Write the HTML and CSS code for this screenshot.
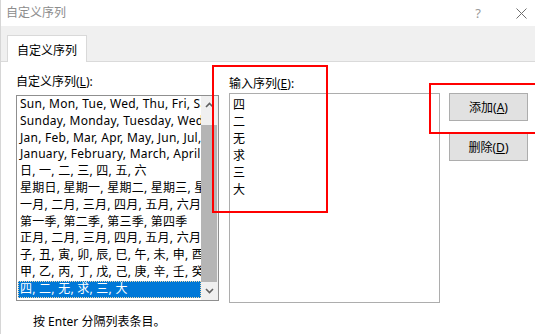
FILE: index.html
```html
<!DOCTYPE html>
<html lang="zh-CN">
<head>
<meta charset="utf-8">
<title>自定义序列</title>
<link rel="stylesheet" href="styles.css">
</head>
<body>
<div class="window">
  <div class="titlebar">
    <span class="title">自定义序列</span>
    <span class="help">?</span>
    <span class="close"><svg width="11" height="11" viewBox="0 0 11 11"><path d="M0.5 0.5 L10.5 10.5 M10.5 0.5 L0.5 10.5" stroke="#6e6e6e" stroke-width="1" fill="none"/></svg></span>
  </div>
  <div class="tabstrip">
    <div class="tab">自定义序列</div>
  </div>
  <div class="content">
    <div class="col col-lists">
      <div class="label label-left">自定义序列(<u>L</u>):</div>
      <div class="listbox">
        <div class="items">
          <div class="item">Sun, Mon, Tue, Wed, Thu, Fri, Sat</div>
          <div class="item">Sunday, Monday, Tuesday, Wednesday, Thursday, Friday, Saturday</div>
          <div class="item">Jan, Feb, Mar, Apr, May, Jun, Jul, Aug, Sep, Oct, Nov, Dec</div>
          <div class="item">January, February, March, April, May, June</div>
          <div class="item">日, 一, 二, 三, 四, 五, 六</div>
          <div class="item">星期日, 星期一, 星期二, 星期三, 星期四, 星期五, 星期六</div>
          <div class="item">一月, 二月, 三月, 四月, 五月, 六月, 七月</div>
          <div class="item">第一季, 第二季, 第三季, 第四季</div>
          <div class="item">正月, 二月, 三月, 四月, 五月, 六月, 七月</div>
          <div class="item">子, 丑, 寅, 卯, 辰, 巳, 午, 未, 申, 酉, 戌, 亥</div>
          <div class="item">甲, 乙, 丙, 丁, 戊, 己, 庚, 辛, 壬, 癸</div>
          <div class="item selected">四, 二, 无, 求, 三, 大</div>
        </div>
        <div class="scrollbar">
          <div class="arrow"><svg width="9" height="6" viewBox="0 0 9 6"><path d="M1 5 L4.5 1.5 L8 5" stroke="#606060" stroke-width="1.6" fill="none"/></svg></div>
          <div class="track"><div class="thumb"></div></div>
          <div class="arrow"><svg width="9" height="6" viewBox="0 0 9 6"><path d="M1 1 L4.5 4.5 L8 1" stroke="#606060" stroke-width="1.6" fill="none"/></svg></div>
        </div>
      </div>
    </div>
    <div class="col col-entries">
      <div class="label label-right">输入序列(<u>E</u>):</div>
      <div class="entrybox">
        <div class="entry">四</div>
        <div class="entry">二</div>
        <div class="entry">无</div>
        <div class="entry">求</div>
        <div class="entry">三</div>
        <div class="entry">大</div>
      </div>
    </div>
    <div class="col col-buttons">
      <button class="btn">添加(<u>A</u>)</button>
      <button class="btn">删除(<u>D</u>)</button>
    </div>
  </div>
  <div class="hint">按 Enter 分隔列表条目。</div>
  <div class="mark mark-entries"></div>
  <div class="mark mark-add"></div>
</div>
</body>
</html>
```

FILE: styles.css
```css
html, body {
  margin: 0;
  padding: 0;
  background: #ffffff;
}

.window {
  position: relative;
  width: 535px;
  height: 334px;
  box-sizing: border-box;
  border-left: 1px solid #d6d6d6;
  background: #ffffff;
  overflow: hidden;
  font-family: "Noto Sans", "Noto Sans CJK SC", sans-serif;
  font-size: 12px;
  color: #000000;
}

.titlebar {
  height: 26px;
  display: flex;
  align-items: center;
  padding-left: 5px;
}

.title {
  color: #8c8c8c;
  flex: 1;
  line-height: 16px;
}

.help {
  color: #9a9a9a;
  font-size: 13px;
  width: 12px;
  text-align: center;
  margin-right: 32px;
}

.close {
  display: flex;
  width: 11px;
  height: 11px;
  margin-right: 8px;
}

.tabstrip {
  height: 36px;
  box-sizing: border-box;
  background: #f0f0f0;
  border-bottom: 1px solid #dadada;
  display: flex;
  align-items: flex-end;
  padding-left: 6px;
}

.tab {
  height: 27px;
  width: 80px;
  box-sizing: border-box;
  background: #ffffff;
  border: 1px solid #d9d9d9;
  border-bottom: none;
  margin-bottom: -1px;
  display: flex;
  align-items: center;
  justify-content: center;
  padding-top: 2px;
}

.content {
  display: flex;
  padding-left: 15px;
}

.col {
  display: flex;
  flex-direction: column;
}

.col-lists {
  width: 203px;
}

.col-entries {
  width: 211px;
  margin-left: 10px;
}

.col-buttons {
  width: 79px;
  margin-left: 9px;
  padding-top: 31px;
  gap: 12px;
}

.label {
  line-height: 16px;
  white-space: nowrap;
}

.label-left {
  margin-top: 12px;
  margin-bottom: 5px;
}

.label-right {
  margin-top: 14px;
  margin-bottom: 1px;
}

.listbox {
  height: 206px;
  box-sizing: border-box;
  border: 1px solid #8f8f8f;
  display: flex;
}

.items {
  flex: 1;
  overflow: hidden;
  padding-left: 1px;
}

.item {
  height: 16.8px;
  line-height: 16.8px;
  padding-left: 2px;
  white-space: nowrap;
  overflow: hidden;
  letter-spacing: 0.25px;
}

.item.selected {
  background: #0078d7;
  color: #ffffff;
  outline: 1px dotted #f3d9a8;
  outline-offset: -1px;
}

.scrollbar {
  width: 17px;
  background: #f0f0f0;
  display: flex;
  flex-direction: column;
}

.arrow {
  height: 18px;
  display: flex;
  align-items: center;
  justify-content: center;
}

.track {
  flex: 1;
  display: flex;
  flex-direction: column;
  justify-content: flex-end;
  padding-top: 10px;
}

.thumb {
  height: 157px;
  background: #b5b5b5;
  margin-right: 1px;
}

.entrybox {
  height: 210px;
  box-sizing: border-box;
  border: 1px solid #adadad;
  padding: 2px 0 0 3px;
}

.entry {
  line-height: 17px;
  height: 17px;
}

.btn {
  width: 79px;
  height: 28px;
  box-sizing: border-box;
  background: #e1e1e1;
  border: 1px solid #adadad;
  border-radius: 0;
  padding: 0;
  font-family: inherit;
  font-size: 12px;
  color: #000000;
}

.hint {
  margin-top: 11px;
  padding-left: 32px;
  line-height: 16px;
}

.mark {
  position: absolute;
  box-sizing: border-box;
  border: 2px solid #ff0000;
}

.mark-entries {
  left: 211px;
  top: 65px;
  width: 116px;
  height: 148px;
}

.mark-add {
  left: 428px;
  top: 83px;
  width: 110px;
  height: 51px;
}
```
